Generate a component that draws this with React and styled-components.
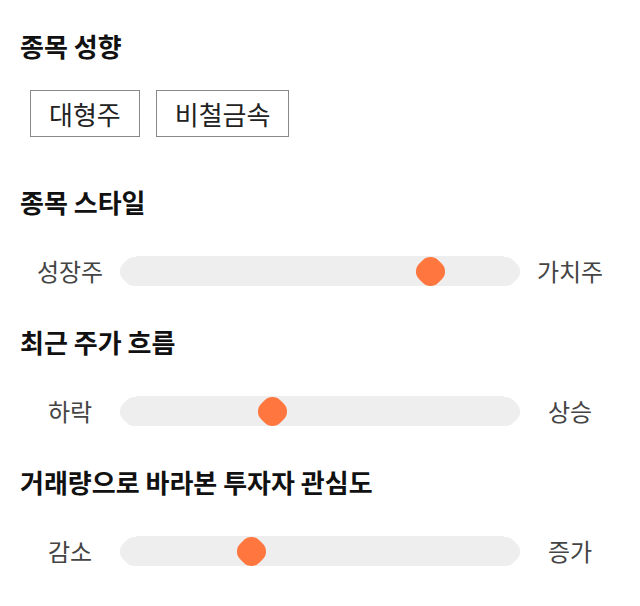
import React from 'react'
import styled, { createGlobalStyle } from 'styled-components'

const GlobalStyle = createGlobalStyle`
  body {
    margin: 0;
    background: #fff;
    font-family: "Noto Sans CJK KR", "Noto Sans", sans-serif;
  }
`

const Page = styled.div`
  width: 640px;
  padding: 30px 20px 20px;
  box-sizing: border-box;
`

const Section = styled.section`
  margin-top: ${(p) => p.$gap || 0}px;
`

const Title = styled.h2`
  margin: 0;
  font-size: 26px;
  line-height: 32px;
  font-weight: 700;
  color: #111;
`

const Tags = styled.div`
  display: flex;
  gap: 16px;
  margin-top: 28px;
  padding-left: 10px;
`

const Tag = styled.button`
  height: 47px;
  padding: 0 18px;
  border: 1px solid #888;
  background: #fff;
  font-family: inherit;
  font-size: 26px;
  line-height: 45px;
  color: #222;
`

const SliderRow = styled.div`
  display: grid;
  grid-template-columns: 100px 1fr 100px;
  align-items: center;
  margin-top: 38px;
  height: 30px;
`

const Label = styled.span`
  text-align: center;
  font-size: 24px;
  line-height: 30px;
  color: #444;
`

const Track = styled.div`
  position: relative;
  height: 30px;
  margin: 0 16px;
  background: #eee;

  &::before,
  &::after {
    content: '';
    position: absolute;
    top: 1.5px;
    width: 27px;
    height: 27px;
    border-radius: 11px;
    background: #eee;
    transform: rotate(45deg);
  }
  &::before { left: -15px; }
  &::after { right: -15px; }
`

const Thumb = styled.div`
  position: absolute;
  top: 1.5px;
  width: 27px;
  height: 27px;
  margin-left: -13.5px;
  border-radius: 11px;
  background: #ff763f;
  transform: rotate(45deg);
  z-index: 1;
`

const sliders = [
  { title: '종목 스타일', left: '성장주', right: '가치주', value: 0.8 },
  { title: '최근 주가 흐름', left: '하락', right: '상승', value: 0.372 },
  { title: '거래량으로 바라본 투자자 관심도', left: '감소', right: '증가', value: 0.315 },
]

const Slider = ({ left, right, value }) => (
  <SliderRow>
    <Label>{left}</Label>
    <Track>
      <Thumb style={{ left: `${value * 100}%` }} />
    </Track>
    <Label>{right}</Label>
  </SliderRow>
)

const App = () => {
  return (
    <Page>
      <GlobalStyle />
      <Section>
        <Title>종목 성향</Title>
        <Tags>
          <Tag>대형주</Tag>
          <Tag>비철금속</Tag>
        </Tags>
      </Section>
      {sliders.map((s, i) => (
        <Section key={s.title} $gap={i === 0 ? 49 : 40}>
          <Title>{s.title}</Title>
          <Slider left={s.left} right={s.right} value={s.value} />
        </Section>
      ))}
    </Page>
  )
}

export default App
